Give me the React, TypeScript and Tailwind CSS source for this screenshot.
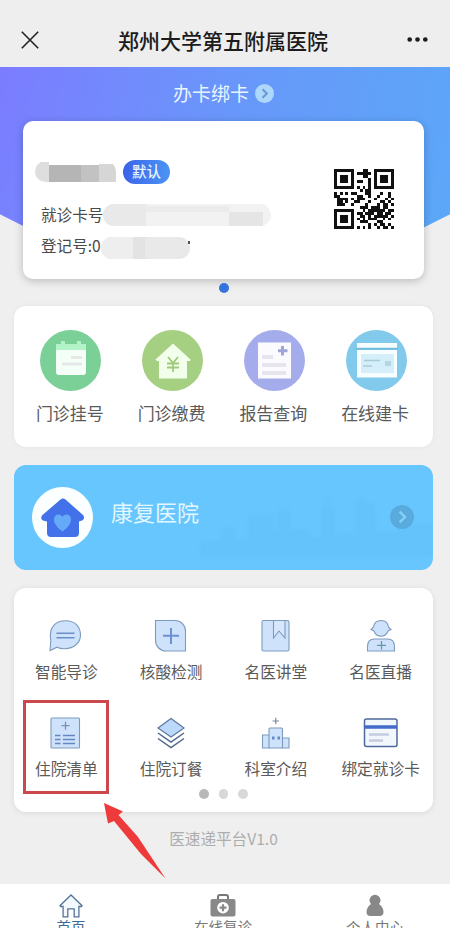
import type { ReactNode } from "react";
import { BsThreeDots } from "react-icons/bs";

const qrRows = [
  "111111100011001111111",
  "100000101111101000001",
  "101110100011001011101",
  "101110100000101011101",
  "101110101100101011101",
  "100000100000101000001",
  "111111101010101111111",
  "000000000101100000000",
  "101010110001100010010",
  "110000001100100100010",
  "011110101110001000101",
  "011010011000100011010",
  "011100100001000101101",
  "000000000111011101100",
  "111111100010111111011",
  "100000101101110110110",
  "101110100110101111101",
  "101110101010111001010",
  "101110100111000110000",
  "100000100000101011010",
  "111111101010100101101",
];

function QrCode() {
  return (
    <svg viewBox="0 0 21 21" className="h-[60px] w-[60px]" shapeRendering="crispEdges">
      {qrRows.map((row, y) =>
        row
          .split("")
          .map((c, x) =>
            c === "1" ? <rect key={`${x}-${y}`} x={x} y={y} width="1" height="1" fill="#111" /> : null
          )
      )}
    </svg>
  );
}

function ChevronBadge({ size, circle, arrow }: { size: number; circle: string; arrow: string }) {
  return (
    <svg width={size} height={size} viewBox="0 0 20 20" fill="none">
      <circle cx="10" cy="10" r="10" fill={circle} />
      <path d="M8 5.5 12.5 10 8 14.5" stroke={arrow} strokeWidth="2" />
    </svg>
  );
}

const services: { label: string; icon: ReactNode }[] = [
  {
    label: "门诊挂号",
    icon: (
      <>
        <circle cx="30.5" cy="30.5" r="30.5" fill="#7ad096" />
        <path d="M16 19h30v23a3 3 0 0 1-3 3H19a3 3 0 0 1-3-3z" fill="#f4fff7" />
        <path d="M16 14h5v-3h4v3h12v-3h4v3h5v6H16z" fill="#b2f3c7" />
        <path d="M31 27.5h11M22 34h20" stroke="#e6e9e8" strokeWidth="3" />
      </>
    ),
  },
  {
    label: "门诊缴费",
    icon: (
      <>
        <circle cx="30.5" cy="30.5" r="30.5" fill="#a6d081" />
        <path d="M31 13.5 13.5 29.5 15 31h2v17.5h28V31h3l.5-1.5z" fill="#f2ffea" />
        <path d="m26 27 5 6 5-6M31 33v9M25 33.5h12M25 37.5h12" stroke="#9fca7d" strokeWidth="1.8" fill="none" />
      </>
    ),
  },
  {
    label: "报告查询",
    icon: (
      <>
        <circle cx="30.5" cy="30.5" r="30.5" fill="#a5aceb" />
        <path d="M14 12.5h33v36H14z" fill="#fbfbff" />
        <path d="M18 27h11M18 35h24M18 43h24" stroke="#e5e5ed" strokeWidth="4" />
        <path d="M38.5 16v9.5M34 20.7h9.5" stroke="#9fa5d6" strokeWidth="3" />
      </>
    ),
  },
  {
    label: "在线建卡",
    icon: (
      <>
        <circle cx="30.5" cy="30.5" r="30.5" fill="#82caeb" />
        <path d="M11 13h40v5H11zM11 20h40v27.5H11z" fill="#f6feff" />
        <path d="M9.5 18.8H52" stroke="#72bddc" strokeWidth="2" />
        <path d="M15 24h33v19H15z" fill="#d4eefa" />
        <path d="M18 30.5h16M17 36h9" stroke="#a9ccdc" strokeWidth="1.5" />
        <path d="M39 31h6v5h-6z" fill="#b4d5e5" />
      </>
    ),
  },
];

const line = { stroke: "#7d9bbd", strokeWidth: 1.1, fill: "#cfe2fb" };

const tools: { label: string; icon: ReactNode; marked?: boolean }[] = [
  {
    label: "智能导诊",
    icon: (
      <>
        <path
          d="M4 34.5 4.8 24.5C2.5 12 9 4.700 19.5 4.700S34.5 11.5 34.5 19 28 33 18 32.700c-2.500 0-5-.5-7-1.500z"
          {...line}
        />
        <path d="M10.5 17.2h18M10.5 21.8h18" stroke="#6d8fc9" strokeWidth="1.4" />
      </>
    ),
  },
  {
    label: "核酸检测",
    icon: (
      <>
        <path d="M4.5 4.5H24a10.5 10.5 0 0 1 10.5 10.5v20H15A10.5 10.5 0 0 1 4.5 24z" {...line} />
        <path d="M12 19.8h16M20 12v16" stroke="#6c91d3" strokeWidth="2" />
      </>
    ),
  },
  {
    label: "名医讲堂",
    icon: (
      <>
        <rect x="6" y="4.5" width="27" height="30.5" rx="1.5" {...line} />
        <path d="M17.5 5v17l5.500-7 6 7V5" stroke="#7d9bbd" strokeWidth="1.1" fill="#d8e8fc" />
      </>
    ),
  },
  {
    label: "名医直播",
    icon: (
      <>
        <path d="M20 4.5c-4.500 0-7 3-7.500 6.500l-2.500 2.500 3 1.500c1.200 3.300 3.700 5.200 7 5.200s5.800-1.900 7-5.200l3-1.500-2.500-2.500c-.5-3.500-3-6.500-7.500-6.500z" {...line} />
        <path d="M6.500 35v-4.500c0-5.500 3-7.500 7-7.500h13c4 0 7 2 7 7.500V35z" {...line} />
        <path d="M16 29.3h9M20.500 25v8.500" stroke="#6796b1" strokeWidth="1.3" />
      </>
    ),
  },
  {
    label: "住院清单",
    marked: true,
    icon: (
      <>
        <rect x="5" y="5" width="28.5" height="30" rx="1" {...line} />
        <path d="M15.5 12.7h8M19.5 8.7v8" stroke="#7792b7" strokeWidth="1.3" />
        <path d="M9 22.5h5.500M17 22.5h12M9 26.5h5.500M17 26.5h12M9 30.5h5.500M17 30.5h12" stroke="#6388c0" strokeWidth="1.4" />
      </>
    ),
  },
  {
    label: "住院订餐",
    icon: (
      <>
        <path d="M20 5.500 33 15 20 24 7 15z" fill="#bcd9fb" stroke="#5c77a0" strokeWidth="1.2" />
        <path d="m7 20 13 9 13-9M7 25.500l13 9 13-9" fill="none" stroke="#4e668c" strokeWidth="1.5" />
      </>
    ),
  },
  {
    label: "科室介绍",
    icon: (
      <>
        <path d="M6.500 22h7v13h-7zM26 25h7v10h-7z" {...line} />
        <rect x="13" y="15" width="13.5" height="20" rx="1" {...line} />
        <path d="M16 23.500v3h2.500v-3zM21.500 23.500v3H24v-3z" fill="#6489c9" />
        <path d="M16.500 8h6.500M19.800 4.700v6.600" stroke="#7b879b" strokeWidth="1.2" />
      </>
    ),
  },
  {
    label: "绑定就诊卡",
    icon: (
      <>
        <rect x="3.500" y="6" width="32.500" height="27.500" rx="2" fill="#f2f7fe" stroke="#50699b" strokeWidth="1.5" />
        <path d="M3.500 14h32.500" stroke="#426bca" strokeWidth="3.5" />
        <path d="M8 21.500h20M8 27.500h14" stroke="#c5cce0" strokeWidth="2.5" />
      </>
    ),
  },
];

function Header() {
  return (
    <header className="flex h-[67px] items-center justify-between bg-[#eeeeee] pt-[12px] pr-[21px] pl-[21px]">
      <svg width="18" height="18" viewBox="0 0 18 18" stroke="#222" strokeWidth="1.6">
        <path d="m.8.8 16.400 16.400M17.200.8.8 17.200" />
      </svg>
      <h1 className="ml-[2px] text-[21px] leading-[28px] font-medium text-[#1c1c1c]">郑州大学第五附属医院</h1>
      <BsThreeDots className="-mr-px text-[25px] text-[#1c1c1c]" />
    </header>
  );
}

function PatientCard() {
  return (
    <div className="mx-auto mt-[13px] flex h-[158px] w-[401px] justify-between rounded-[10px] bg-white shadow-[0_2px_8px_rgba(0,0,0,0.22)]">
      <div className="flex flex-col pt-[38px] pl-[12px]">
        <div className="flex h-[25px] items-center">
          <div className="flex h-[21px] w-[81px] items-end overflow-hidden rounded-l-full rounded-tr-full">
            <span className="h-[20px] w-[14px] bg-[#dedede]" />
            <span className="h-[17px] w-[32px] bg-[#b5b5b5]" />
            <span className="h-[17px] w-[18px] bg-[#c2c2c2]" />
            <span className="h-[18px] w-[17px] bg-[#d6d6d6]" />
          </div>
          <span className="ml-[7px] flex h-[24px] w-[47px] items-center justify-center rounded-full bg-linear-to-r from-[#3d62e9] to-[#4b94f4] text-[14.5px] leading-none font-medium text-[#e9f4ff]">
            默认
          </span>
        </div>
        <div className="mt-[19px] ml-[6px] flex h-[24px] items-center text-[15.6px] leading-none text-[#4a4a4a]">
          就诊卡号
          <div className="flex h-[22px] w-[168px] overflow-hidden rounded-full bg-[#f2f2f2]">
            <span className="w-[43px] bg-[#e9e9e9]" />
            <span className="mt-[2px] h-[6px] w-[83px] bg-[#ebebeb]" />
            <span className="mt-[8px] w-[34px] bg-[#e5e5e5]" />
          </div>
        </div>
        <div className="mt-[7px] ml-[6px] flex h-[24px] items-center text-[15.6px] leading-none text-[#4a4a4a]">
          登记号:0
          <div className="mt-[4px] flex h-[22px] w-[89px] overflow-hidden rounded-full bg-[#e9e9e9]">
            <span className="w-[32px] bg-[#eeeeee]" />
            <span className="w-[12px] bg-[#e3e3e3]" />
          </div>
          <span className="mb-[8px] -ml-[2px] h-[3px] w-[2px] bg-[#555]" />
        </div>
      </div>
      <div className="pt-[48px] pr-[30px]">
        <QrCode />
      </div>
    </div>
  );
}

function Skyline() {
  return (
    <svg width="232" height="72" viewBox="0 0 232 72" className="absolute right-0 bottom-[8px] blur-[1.5px]">
      <path
        d="M0 66V52h22v-14h12v12h14V26h23v14h6V20h12v20h18v8h14V16h4V4h3v12h5v28h22V12l5-6 6 6 8 3v28h22v-8h36v31z"
        fill="#5db9f0"
        opacity=".28"
      />
    </svg>
  );
}

function TabBar() {
  return (
    <nav className="grid h-[44px] grid-cols-[142px_162px_146px] overflow-hidden bg-white text-[14.5px] leading-[20px] text-[#777]">
      <div className="flex flex-col items-center pt-[10px] text-[#416a96]">
        <svg width="24" height="24" viewBox="0 0 24 24" fill="#f4f9ff" stroke="#55749a" strokeWidth="1.3">
          <path d="M12 1 1 11.700l.5.8h2.600v10.300h4.700v-8h6.400v8h4.700V12.500h2.600l.5-.8z" />
        </svg>
        <span className="-mt-px shrink-0">首页</span>
      </div>
      <div className="flex flex-col items-center pt-[10px]">
        <svg width="26" height="24" viewBox="0 0 26 24" fill="none">
          <path d="M8 5V3q0-2 2-2h6q2 0 2 2v2" stroke="#777" strokeWidth="2" />
          <rect x=".5" y="5" width="25" height="17.5" rx="2" fill="#888" />
          <circle cx="13" cy="13.7" r="5.8" fill="#fff" />
          <path d="M9.500 13.700h7M13 10.200v7" stroke="#888" strokeWidth="2.2" />
        </svg>
        <span className="-mt-px shrink-0">在线复诊</span>
      </div>
      <div className="flex flex-col items-center pt-[10px]">
        <svg width="24" height="24" viewBox="0 0 24 24" fill="#888" className="-ml-[4px]">
          <circle cx="12" cy="6.300" r="5.500" />
          <path d="M8 10h8c3 2 4.500 5 4.500 8q0 4-4 4h-9q-4 0-4-4c0-3 1.500-6 4.500-8z" />
        </svg>
        <span className="-mt-px -ml-[4px] shrink-0">个人中心</span>
      </div>
    </nav>
  );
}

export default function App() {
  return (
    <div className="flex h-[928px] w-[450px] flex-col overflow-hidden bg-[#efefef] font-['Noto_Sans_CJK_SC',sans-serif]">
      <Header />
      <section className="relative h-[239px] pr-[3px]">
        <div className="absolute inset-x-0 top-0 h-[205px] bg-linear-105 from-[#7b7cff] via-[#6798fa] via-50% to-[#5ba8f8] [clip-path:circle(467px_at_225px_-262px)]" />
        <div className="relative">
          <button type="button" className="mx-auto flex h-[41px] items-center pt-[12px] text-[19px] leading-none text-[#e8f5ff]">
            <span className="mr-[6px] mb-[2px]">办卡绑卡</span>
            <ChevronBadge size={19} circle="#add7fb" arrow="#6597d3" />
          </button>
          <PatientCard />
          <div className="mx-auto mt-[4px] h-[10px] w-[10px] rounded-full bg-[#3474df]" />
        </div>
      </section>

      <main className="pr-[17px] pl-[14px]">
        <section className="grid h-[141px] grid-cols-4 rounded-[12px] bg-white px-[6px] pt-[24px] shadow-[0_0_5px_rgba(0,0,0,0.05)]">
          {services.map(({ label, icon }) => (
            <div key={label} className="flex flex-col items-center">
              <svg width="61" height="61" viewBox="0 0 61 61">
                {icon}
              </svg>
              <span className="mt-[10px] pr-[2px] text-[17px] leading-[24px] text-[#5a5a5a]">{label}</span>
            </div>
          ))}
        </section>

        <section className="relative mt-[18px] flex h-[105px] overflow-hidden rounded-[12px] bg-[#67c6fe] pl-[18px]">
          <Skyline />
          <svg width="61" height="61" viewBox="0 0 61 61" className="relative mt-[22px]">
            <circle cx="30.5" cy="30.5" r="30.5" fill="#fbffff" />
            <path
              d="M28.500 12.500q2.500-2 5 0L51 28c2 2 1 4.500-1 5.500l-3 1V46q0 4-4 4H19q-4 0-4-4V34.500l-4-1c-2-1-2.500-3.500-.5-5.500z"
              fill="#4371ea"
            />
            <path d="M30.500 44.500C25 40.500 22 36.500 22 32.500c0-5.500 6-6.500 8.500-2.500 2.500-4 8.500-3 8.500 2.500 0 4-3 8-8.500 12z" fill="#65aaf9" />
          </svg>
          <span className="mt-[31px] ml-[18px] text-[22px] leading-[30px] text-[#e2f7ff]">康复医院</span>
          <div className="relative mt-[40px] mr-[19px] ml-auto">
            <ChevronBadge size={24} circle="#59abdd" arrow="#86cff4" />
          </div>
        </section>

        <section className="mt-[18px] h-[224px] rounded-[12px] bg-white pt-[28px] shadow-[0_1px_6px_rgba(0,0,0,0.09)]">
          <div className="grid grid-cols-4">
            {tools.map(({ label, icon, marked }) => (
              <div key={label} className="relative flex h-[97px] flex-col items-center">
                <svg width="40" height="40" viewBox="0 0 40 40">
                  {icon}
                </svg>
                <span className="mt-[4px] text-[15.7px] leading-[24px] whitespace-nowrap text-[#5a5a5a]">{label}</span>
                {marked && (
                  <>
                    <div className="absolute -top-[13px] left-[9px] h-[94px] w-[86px] border-[3px] border-[#cb484d]" />
                    <svg width="66" height="80" viewBox="0 0 66 80" className="absolute top-[89px] left-[89px] z-10">
                      <path d="M1 1 20 9.500l-4.500 3.500L35 35l27.500 41.500L38 52 11 19l-6 2.500z" fill="#ee3a3a" />
                    </svg>
                  </>
                )}
              </div>
            ))}
          </div>
          <div className="-mt-[21px] flex justify-center gap-[10px]">
            <span className="h-[9.5px] w-[9.5px] rounded-full bg-[#b8b8b8]" />
            <span className="h-[9.5px] w-[9.5px] rounded-full bg-[#d8d8d8]" />
            <span className="h-[9.5px] w-[9.5px] rounded-full bg-[#d8d8d8]" />
          </div>
        </section>
      </main>
      <footer className="h-[72px] pt-[14px] pr-[3px] text-center text-[15.6px] leading-[24px] text-[#adadad]">
        医速递平台V1.0
      </footer>
      <TabBar />
    </div>
  );
}
